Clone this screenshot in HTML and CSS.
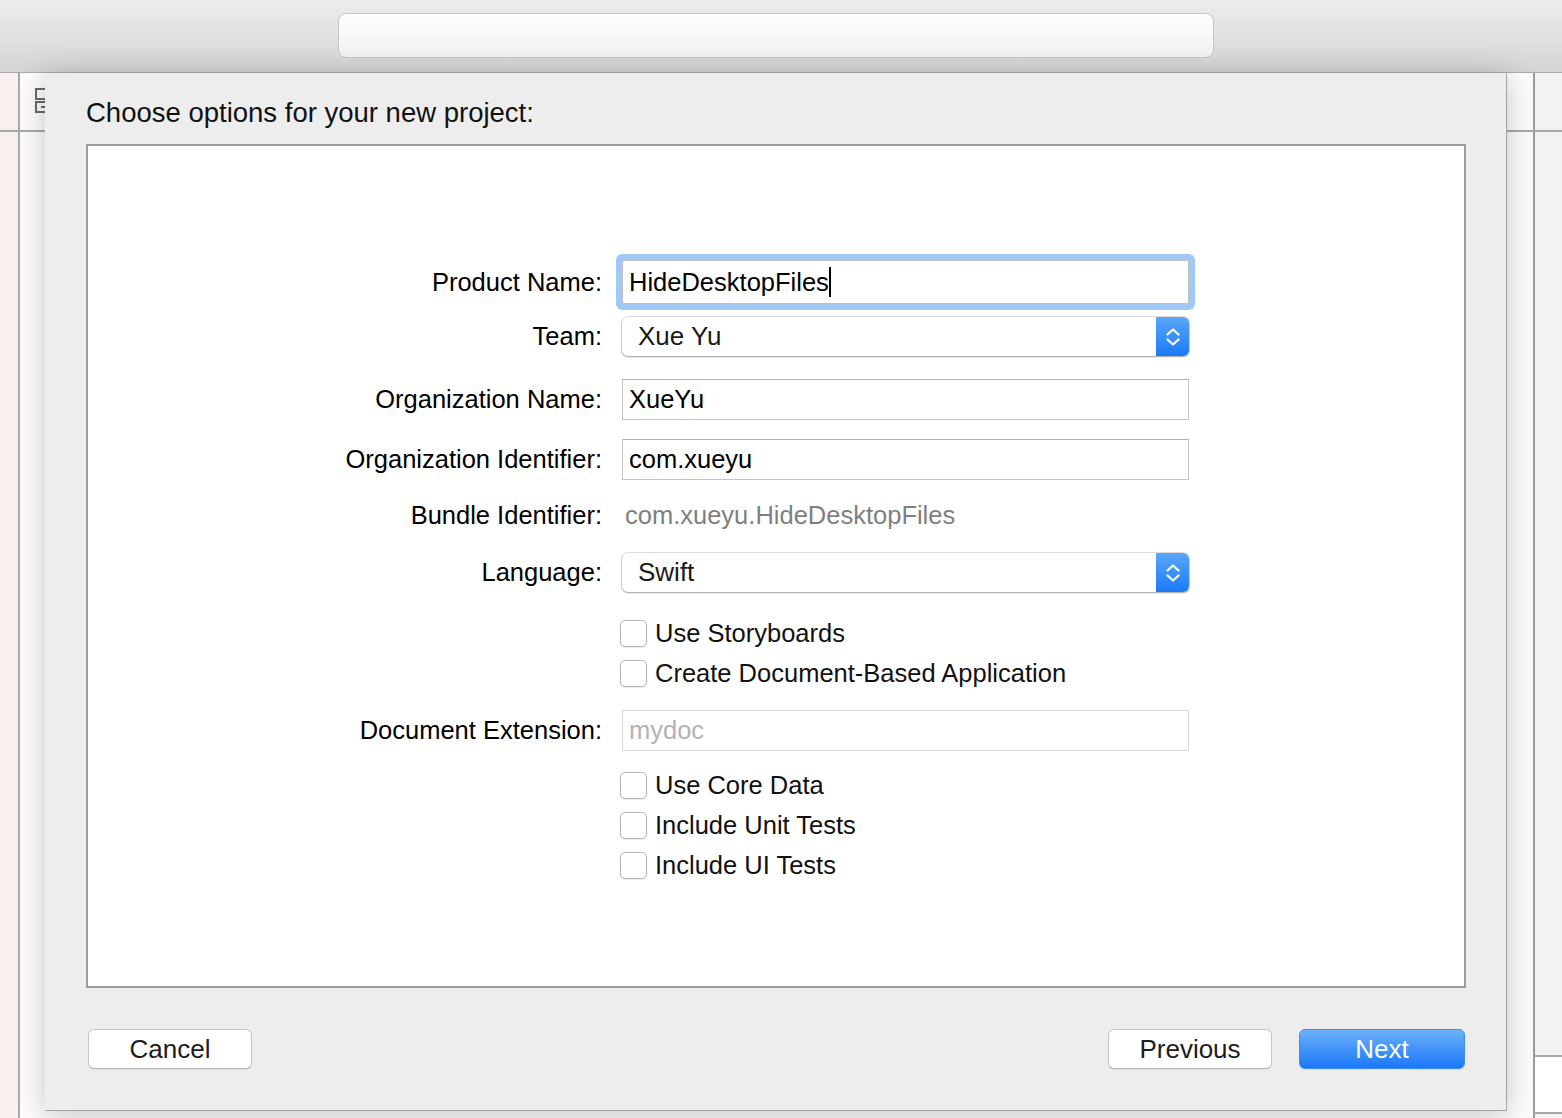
FILE: index.html
```html
<!DOCTYPE html>
<html>
<head>
<meta charset="utf-8">
<link rel="stylesheet" href="styles.css">
</head>
<body>
<div class="toolbar">
  <div class="search"></div>
</div>
<div class="workspace">
  <div class="ws-row ws-head">
    <div class="pane-a"></div>
    <div class="pane-b">
      <svg class="tbl-icon" width="12" height="26" viewBox="0 0 12 26"><rect x="1" y="1" width="10" height="10" fill="none" stroke="#6a6a6a" stroke-width="2"/><rect x="1" y="14" width="10" height="10" fill="none" stroke="#6a6a6a" stroke-width="2"/><rect x="6" y="18" width="4" height="2" fill="#6a6a6a"/></svg>
    </div>
    <div class="pane-c"></div>
  </div>
  <div class="ws-row ws-body">
    <div class="pane-a"></div>
    <div class="pane-b"></div>
    <div class="pane-c">
      <div class="pane-c-top"></div>
      <div class="pane-c-bottom"></div>
    </div>
  </div>
</div>

<div class="sheet">
  <div class="sheet-title">Choose options for your new project:</div>
  <div class="options-box">
    <div class="row r1">
      <div class="label">Product Name:</div>
      <div class="field focus"><span>HideDesktopFiles</span><span class="caret"></span></div>
    </div>
    <div class="row r2">
      <div class="label">Team:</div>
      <div class="popup"><span class="popup-text">Xue Yu</span><span class="stepper"><svg width="14" height="24" viewBox="0 0 14 24"><path d="M1.5 9.5 L7 4.5 L12.5 9.5" fill="none" stroke="#fff" stroke-width="2.2" stroke-linecap="round" stroke-linejoin="round"/><path d="M1.5 14.5 L7 19.5 L12.5 14.5" fill="none" stroke="#fff" stroke-width="2.2" stroke-linecap="round" stroke-linejoin="round"/></svg></span></div>
    </div>
    <div class="row r3">
      <div class="label">Organization Name:</div>
      <div class="field">XueYu</div>
    </div>
    <div class="row r4">
      <div class="label">Organization Identifier:</div>
      <div class="field">com.xueyu</div>
    </div>
    <div class="row r5">
      <div class="label">Bundle Identifier:</div>
      <div class="static">com.xueyu.HideDesktopFiles</div>
    </div>
    <div class="row r6">
      <div class="label">Language:</div>
      <div class="popup"><span class="popup-text">Swift</span><span class="stepper"><svg width="14" height="24" viewBox="0 0 14 24"><path d="M1.5 9.5 L7 4.5 L12.5 9.5" fill="none" stroke="#fff" stroke-width="2.2" stroke-linecap="round" stroke-linejoin="round"/><path d="M1.5 14.5 L7 19.5 L12.5 14.5" fill="none" stroke="#fff" stroke-width="2.2" stroke-linecap="round" stroke-linejoin="round"/></svg></span></div>
    </div>
    <div class="row r7 check-row">
      <div class="label"></div>
      <div class="check"><span class="box"></span>Use Storyboards</div>
    </div>
    <div class="row r8 check-row">
      <div class="label"></div>
      <div class="check"><span class="box"></span>Create Document-Based Application</div>
    </div>
    <div class="row r9">
      <div class="label">Document Extension:</div>
      <div class="field disabled">mydoc</div>
    </div>
    <div class="row r10 check-row">
      <div class="label"></div>
      <div class="check"><span class="box"></span>Use Core Data</div>
    </div>
    <div class="row r11 check-row">
      <div class="label"></div>
      <div class="check"><span class="box"></span>Include Unit Tests</div>
    </div>
    <div class="row r12 check-row">
      <div class="label"></div>
      <div class="check"><span class="box"></span>Include UI Tests</div>
    </div>
  </div>
  <div class="footer">
    <div class="btn">Cancel</div>
    <div class="spacer"></div>
    <div class="btn">Previous</div>
    <div class="btn primary">Next</div>
  </div>
</div>
</body>
</html>
```

FILE: styles.css
```css
* { box-sizing: border-box; }
html, body {
  margin: 0;
  padding: 0;
  width: 1562px;
  height: 1118px;
  overflow: hidden;
  font-family: "Liberation Sans", Arial, sans-serif;
  background: #ffffff;
}
.toolbar {
  height: 73px;
  background: linear-gradient(#ececec, #d4d4d4);
  border-bottom: 1px solid #ababab;
  display: flex;
  align-items: flex-start;
  justify-content: flex-start;
  padding: 13px 0 0 338px;
}
.search {
  width: 876px;
  height: 45px;
  border-radius: 8px;
  border: 1px solid #c6c6c6;
  background: linear-gradient(#fdfdfd, #f2f2f2);
}
.workspace {
  height: 1045px;
  display: flex;
  flex-direction: column;
}
.ws-row { display: flex; }
.ws-head {
  height: 59px;
  border-bottom: 2px solid #a8a8a8;
}
.ws-body { flex: 1; }
.pane-a {
  width: 20px;
  background: #f7f0ee;
  border-right: 2px solid #a9a9a9;
}
.pane-b {
  flex: 1;
  background: #fcfcfc;
  position: relative;
}
.tbl-icon {
  position: absolute;
  left: 15px;
  top: 15px;
}
.pane-c {
  width: 29px;
  background: #f2f2f2;
  border-left: 2px solid #9c9c9c;
  display: flex;
  flex-direction: column;
}
.pane-c-top { height: 923px; }
.pane-c-bottom {
  flex: 1;
  background: #fff;
  border-top: 2px solid #a8a8a8;
  border-bottom: 2px solid #a8a8a8;
  margin-bottom: 4px;
}

.sheet {
  position: absolute;
  left: 45px;
  top: 73px;
  width: 1462px;
  height: 1038px;
  background: #ededed;
  border-right: 1px solid #a3a3a3;
  border-bottom: 1px solid #a3a3a3;
  box-shadow: 0 4px 28px rgba(0,0,0,0.22);
  padding: 0 40px 0 41px;
  display: flex;
  flex-direction: column;
}
.sheet-title {
  margin-top: 24px;
  height: 32px;
  line-height: 32px;
  font-size: 27.5px;
  color: #111;
  margin-bottom: 15px;
}
.options-box {
  height: 844px;
  background: #fff;
  border: 2px solid #9d9d9d;
  padding-top: 109px;
  display: flex;
  flex-direction: column;
}
.row {
  display: flex;
  align-items: center;
  font-size: 25.5px;
  color: #000;
}
.label {
  width: 514px;
  text-align: right;
  margin-right: 20px;
  flex: none;
}
.r1 { height: 54px; }
.r2 { margin-top: 8px; height: 39px; }
.r3 { margin-top: 23px; height: 41px; }
.r4 { margin-top: 19px; height: 41px; }
.r5 { margin-top: 15px; height: 40px; }
.r6 { margin-top: 18px; height: 39px; }
.r7 { margin-top: 28px; height: 26px; }
.r8 { margin-top: 14px; height: 26px; }
.r9 { margin-top: 24px; height: 40px; }
.r10 { margin-top: 22px; height: 26px; }
.r11 { margin-top: 14px; height: 26px; }
.r12 { margin-top: 14px; height: 26px; }

.field {
  width: 567px;
  height: 41px;
  border: 1px solid #c4c4c4;
  border-top-color: #b4b4b4;
  background: #fff;
  padding-left: 6px;
  display: flex;
  align-items: center;
  color: #000;
}
.field.focus {
  height: 44px;
  border-color: #c0c0c0;
  box-shadow: 0 0 0 6px #a2c9f6;
  border-radius: 2px;
}
.caret {
  width: 2px;
  height: 30px;
  background: #000;
}
.field.disabled {
  border-color: #d9d9d9;
  color: #b3b3b3;
}
.static {
  color: #7f7f7f;
  padding-left: 3px;
}
.popup {
  width: 567px;
  height: 39px;
  border-radius: 6px;
  background: #fff;
  box-shadow: 0 0 0 1px rgba(0,0,0,0.13), 0 1px 2px rgba(0,0,0,0.28);
  display: flex;
  align-items: center;
  justify-content: space-between;
  overflow: hidden;
}
.popup-text {
  padding-left: 16px;
  font-size: 26px;
  color: #1a1a1a;
}
.stepper {
  width: 33px;
  height: 100%;
  background: linear-gradient(#5aa7f9, #1b7af7);
  display: flex;
  align-items: center;
  justify-content: center;
}
.check {
  display: flex;
  align-items: center;
  margin-left: -2px;
  color: #111;
}
.box {
  width: 27px;
  height: 27px;
  border-radius: 5px;
  border: 1px solid #b5b5b5;
  background: #fff;
  box-shadow: 0 1px 1px rgba(0,0,0,0.08);
  margin-right: 8px;
  flex: none;
}

.footer {
  margin-top: 41px;
  padding: 0 1px 0 2px;
  display: flex;
  align-items: center;
}
.spacer { flex: 1; }
.btn {
  width: 164px;
  height: 40px;
  border-radius: 6px;
  background: #fff;
  border: 1px solid #c6c6c6;
  border-bottom-color: #b3b3b3;
  box-shadow: 0 1px 1px rgba(0,0,0,0.06);
  font-size: 26px;
  color: #1c1c1c;
  display: flex;
  align-items: center;
  justify-content: center;
}
.btn + .btn { margin-left: 27px; }
.btn.primary {
  width: 166px;
  border: 1px solid #3d8ef5;
  background: linear-gradient(#6cb0f9, #1a78f7);
  color: #fff;
}
```
